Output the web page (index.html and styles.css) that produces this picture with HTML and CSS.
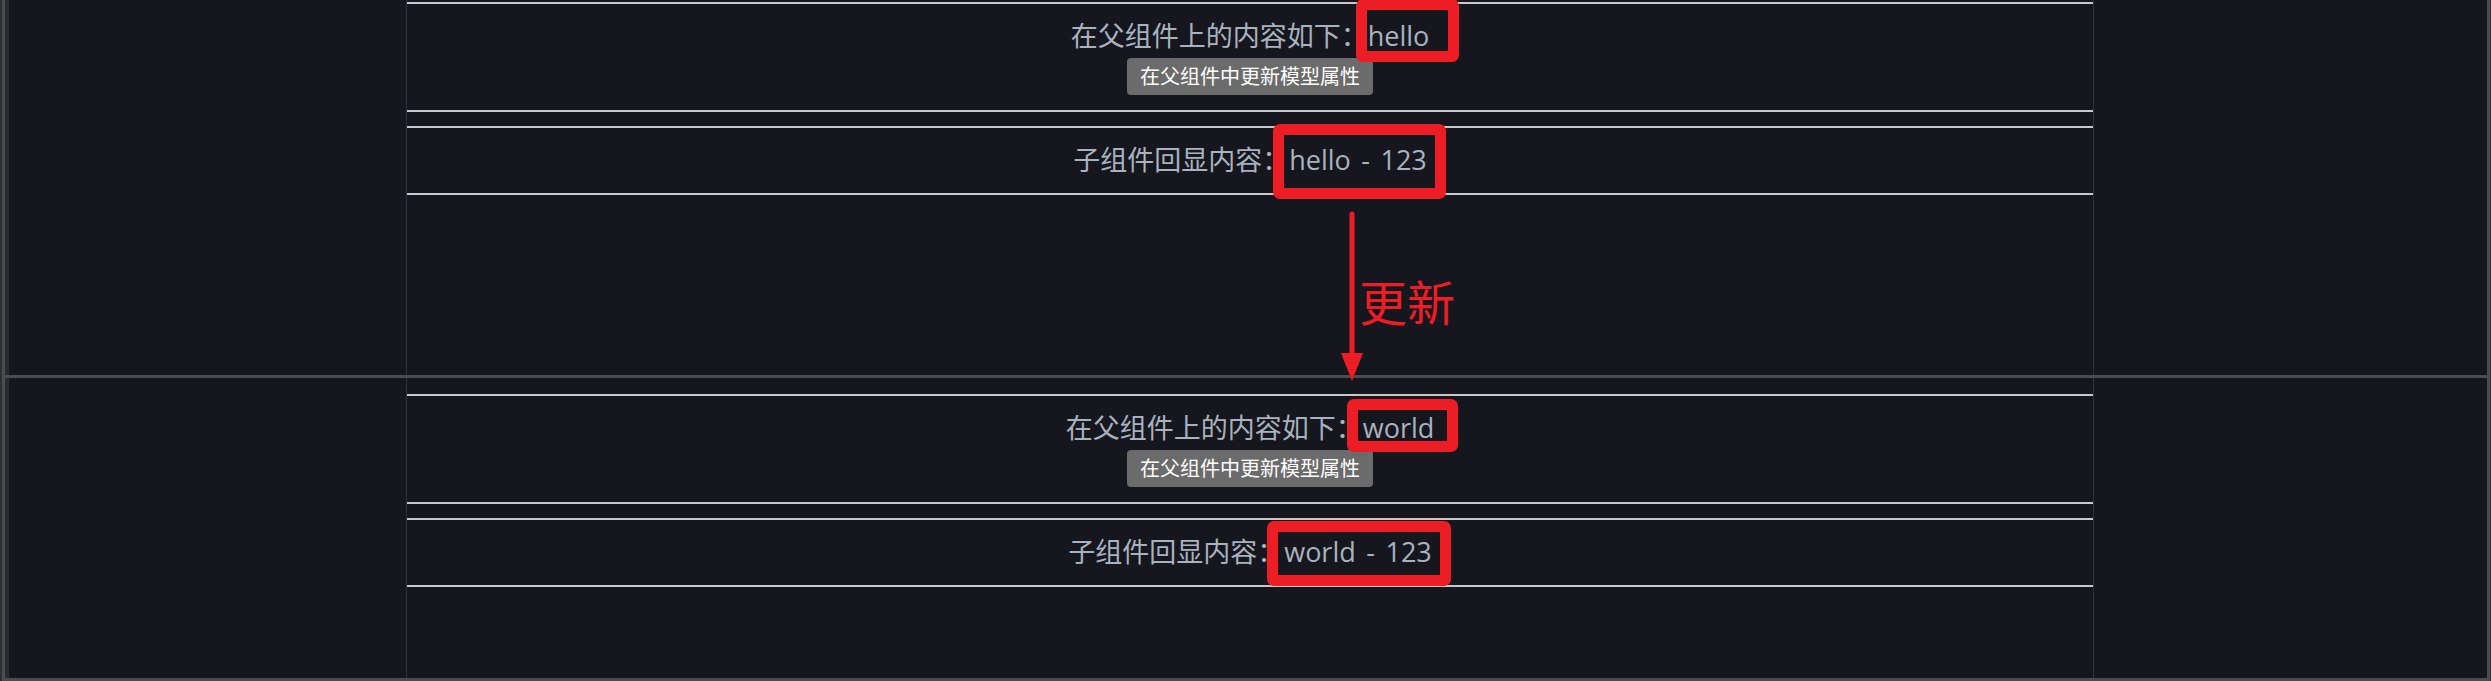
FILE: index.html
```html
<!DOCTYPE html>
<html lang="zh-CN">
<head>
    <meta charset="UTF-8">
    <meta name="viewport" content="width=device-width, initial-scale=1.0">
    <title>父子组件双向绑定</title>
    <link rel="stylesheet" href="styles.css">
</head>
<body>
    <div class="page">
        <!-- before the click -->
        <div class="shot shot-first">
            <div class="col">
                <div class="parent">
                    <div class="line">在父组件上的内容如下：<span class="mark mark-p1">hello</span></div>
                    <div class="btn-row"><button class="btn">在父组件中更新模型属性</button></div>
                </div>
                <div class="child">
                    <div class="line">子组件回显内容：<span class="mark mark-c1">hello - 123</span></div>
                </div>
            </div>
        </div>

        <!-- after the click -->
        <div class="shot">
            <div class="col">
                <div class="parent">
                    <div class="line">在父组件上的内容如下：<span class="mark mark-p2">world</span></div>
                    <div class="btn-row"><button class="btn">在父组件中更新模型属性</button></div>
                </div>
                <div class="child">
                    <div class="line">子组件回显内容：<span class="mark mark-c2">world - 123</span></div>
                </div>
            </div>
        </div>

        <div class="note">
            <svg class="arrow" width="30" height="176" viewBox="0 0 30 176">
                <line x1="15" y1="6" x2="15" y2="150" stroke="#ec1d25" stroke-width="5" stroke-linecap="round"/>
                <polygon points="4,145 26,145 15,173" fill="#ec1d25"/>
            </svg>
            <span class="note-label">更新</span>
        </div>
    </div>
</body>
</html>
```

FILE: styles.css
```css
html, body {
    margin: 0;
    height: 681px;
    overflow: hidden;
}
body {
    background: #2e2f31;
    padding: 0 1px 0 2px;
    font-family: "Open Sans", "Noto Sans CJK SC", sans-serif;
}
.page {
    position: relative;
    display: flow-root;
}
.shot {
    display: flex;
    height: 300px;
    background: #16171e;
    border-left: 3px solid #4b4c50;
    border-right: 3px solid #4b4c50;
    border-bottom: 3px solid #4b4c50;
    box-shadow: inset 4px 0 0 #2a2b2e;
}
.shot-first {
    height: 389px;
    margin-top: -14px;
}
.col {
    box-sizing: border-box;
    width: 1688px;
    margin-left: 401px;
    padding-top: 16px;
    border-left: 1px solid #31333c;
    border-right: 1px solid #31333c;
}
.parent,
.child {
    text-align: center;
    border-top: 2px solid #c8c8c8;
    border-bottom: 2px solid #c8c8c8;
}
.parent {
    padding: 12px 0 15px;
}
.child {
    margin-top: 14px;
    padding: 12px 0 13px;
}
.line {
    color: #a9b2bf;
    font-size: 27px;
    line-height: 40px;
}
.btn-row {
    display: flex;
    justify-content: center;
    margin-top: 2px;
}
.btn {
    font-family: "Open Sans", "Noto Sans CJK SC", sans-serif;
    font-size: 20px;
    line-height: 27px;
    padding: 5px 13px;
    color: #fff;
    background: #6b6b6b;
    border: none;
    border-radius: 4px;
}

/* red frames around the bound values */
.mark {
    position: relative;
    word-spacing: 3.5px;
}
.mark::after {
    content: "";
    position: absolute;
    border: 11px solid #ec1d25;
    border-radius: 7px;
    pointer-events: none;
}
.mark-p1::after { left: -12px; right: -30px; top: -18px; bottom: -8px; }
.mark-c1::after { left: -16px; right: -19px; top: -17px; bottom: -21px; }
.mark-p2::after { left: -16px; right: -24px; top: -10px; bottom: -6px; }
.mark-c2::after { left: -17px; right: -19px; top: -12px; bottom: -16px; }

/* arrow between the two states */
.note {
    position: absolute;
    left: 1335px;
    top: 208px;
    display: flex;
}
.note-label {
    margin: 68px 0 0 -8px;
    color: #ec1d25;
    font-family: "Noto Sans CJK SC", sans-serif;
    font-size: 48px;
    line-height: 48px;
}
```
